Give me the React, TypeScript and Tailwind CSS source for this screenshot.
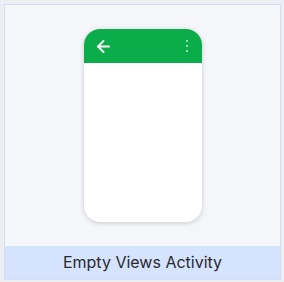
import { ArrowLeft } from "lucide-react";

export default function App() {
  return (
    <div className="w-[284px] h-[282px] bg-[#eceef3] p-[4px] pr-[3px] pb-[2px]" style={{ fontFamily: "Inter, 'Noto Sans', sans-serif" }}>
      <div className="h-full flex flex-col border border-[#d3def7] bg-[#f5f6f9]">
        {/* preview */}
        <div className="flex-1 flex items-center justify-center">
          <div className="w-[118px] h-[193px] rounded-[16px] bg-white overflow-hidden shadow-[0_1px_5px_rgba(0,0,0,0.18)] flex flex-col">
            <div className="h-[34px] bg-[#0aad4a] flex items-center justify-between pl-[10px] pr-[14px]">
              <ArrowLeft size={19} strokeWidth={2.4} className="text-white" />
              <div className="flex flex-col gap-[3px]">
                <div className="w-[2px] h-[2px] rounded-full bg-white/75" />
                <div className="w-[2px] h-[2px] rounded-full bg-white/75" />
                <div className="w-[2px] h-[2px] rounded-full bg-white/75" />
              </div>
            </div>
          </div>
        </div>
        {/* label */}
        <div className="h-[33px] bg-[#d6e3ff] flex items-center justify-center text-[16px] text-[#2a2a2e] pb-[1px]">
          Empty Views Activity
        </div>
      </div>
    </div>
  );
}
